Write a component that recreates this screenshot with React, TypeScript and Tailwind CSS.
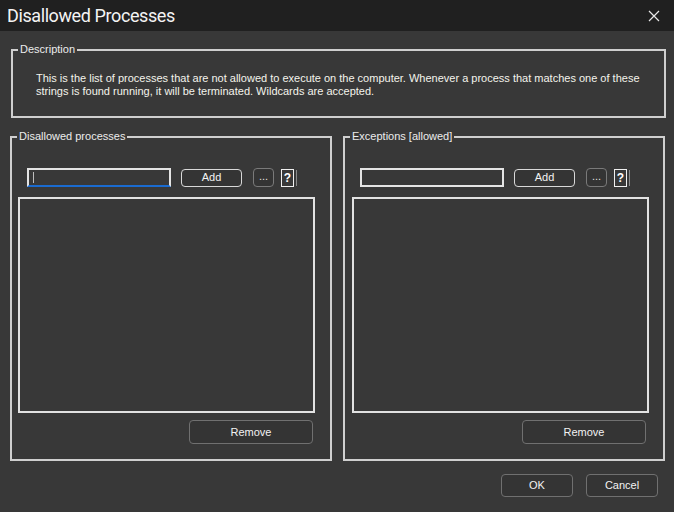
import React from "react";

function GroupBox({
  title,
  className,
  children,
}: {
  title: string;
  className?: string;
  children: React.ReactNode;
}) {
  return (
    <fieldset
      className={`border-2 border-[#cfcfcf] pl-[5px] pr-0 pb-0 ${className ?? ""}`}
    >
      <legend className="px-[2px] text-[11px] leading-[13px] text-[#ececec]">
        {title}
      </legend>
      {children}
    </fieldset>
  );
}

function ListPanel({ focused, listX }: { focused?: boolean; listX: string }) {
  return (
    <div className="flex flex-col">
      <div className="ml-[10px] mt-[25px] flex items-center">
        <div
          className={`relative h-[19px] w-[144px] border-2 border-[#e4e4e4] ${
            focused ? "border-b-[#1a6bd0]" : ""
          }`}
        >
          {focused && (
            <span className="absolute left-[4px] top-[2px] h-[11px] w-px bg-[#bdbdbd]" />
          )}
        </div>
        <button className="ml-[10px] h-[18px] w-[61px] rounded-[4px] border border-[#d8d8d8] bg-[#343434] text-[11px] leading-none text-[#f2f2f2]">
          Add
        </button>
        <button className="ml-[11px] h-[19px] w-[21px] rounded-[4px] border border-[#7a7a7a] bg-[#343434] pb-[3px] text-[11px] leading-none text-[#e0e0e0]">
          ...
        </button>
        <div className="ml-[7px] flex h-[18px] items-center">
          <span className="flex h-[18px] w-[13px] items-center justify-center border border-[#f0f0f0] text-[12px] font-bold leading-none text-white">
            ?
          </span>
          <span className="ml-[2px] h-[16px] w-px bg-[#8a8a8a]" />
        </div>
      </div>
      <div className={`mt-[10px] h-[216px] w-[297px] border-2 border-[#e2e2e2] ${listX}`} />
      <div className="mt-[7px] flex justify-end pr-[17px]">
        <button className="h-[24px] w-[124px] rounded-[4px] border border-[#707070] bg-[#343434] text-[11px] text-[#f2f2f2]">
          Remove
        </button>
      </div>
    </div>
  );
}

export default function App() {
  return (
    <div
      className="flex h-[512px] w-[674px] flex-col bg-[#383838] text-[#f0f0f0]"
      style={{ fontFamily: '"Liberation Sans", Arial, sans-serif' }}
    >
      {/* Title bar */}
      <div className="flex h-[31px] shrink-0 items-center justify-between bg-[#202020] pl-[7px] pr-[14px]">
        <span
          className="text-[18px] leading-none tracking-[-0.4px] text-[#f4f4f4]"
          style={{ fontFamily: 'Roboto, "Noto Sans", sans-serif' }}
        >
          Disallowed Processes
        </span>
        <svg className="h-[12px] w-[12px]" viewBox="0 0 12 12" stroke="#e8e8e8" strokeWidth={1.2}>
          <path d="M1 1l10 10M11 1L1 11" />
        </svg>
      </div>

      <div className="flex flex-1 flex-col">
        {/* Description */}
        <GroupBox title="Description" className="ml-[11px] mr-[8px] mt-[12px] h-[75px]">
          <p className="mt-[16px] pl-[18px] text-[11px] leading-[13px] text-[#f4f4ec]">
            This is the list of processes that are not allowed to execute on the computer. Whenever a process that matches one of these
            <br />
            strings is found running, it will be terminated. Wildcards are accepted.
          </p>
        </GroupBox>

        {/* Lists */}
        <div className="ml-[10px] mr-[9px] mt-[12px] flex gap-[11px]">
          <GroupBox title="Disallowed processes" className="h-[331px] w-[322px]">
            <ListPanel focused listX="ml-[1px]" />
          </GroupBox>
          <GroupBox title="Exceptions [allowed]" className="h-[331px] w-[322px]">
            <ListPanel listX="ml-[2px]" />
          </GroupBox>
        </div>

        {/* Footer */}
        <div className="mt-[13px] flex justify-end gap-[13px] pr-[16px]">
          <button className="h-[23px] w-[72px] rounded-[4px] border border-[#707070] bg-[#343434] text-[11px] text-[#f2f2f2]">
            OK
          </button>
          <button className="h-[23px] w-[72px] rounded-[4px] border border-[#707070] bg-[#343434] text-[11px] text-[#f2f2f2]">
            Cancel
          </button>
        </div>
      </div>
    </div>
  );
}
